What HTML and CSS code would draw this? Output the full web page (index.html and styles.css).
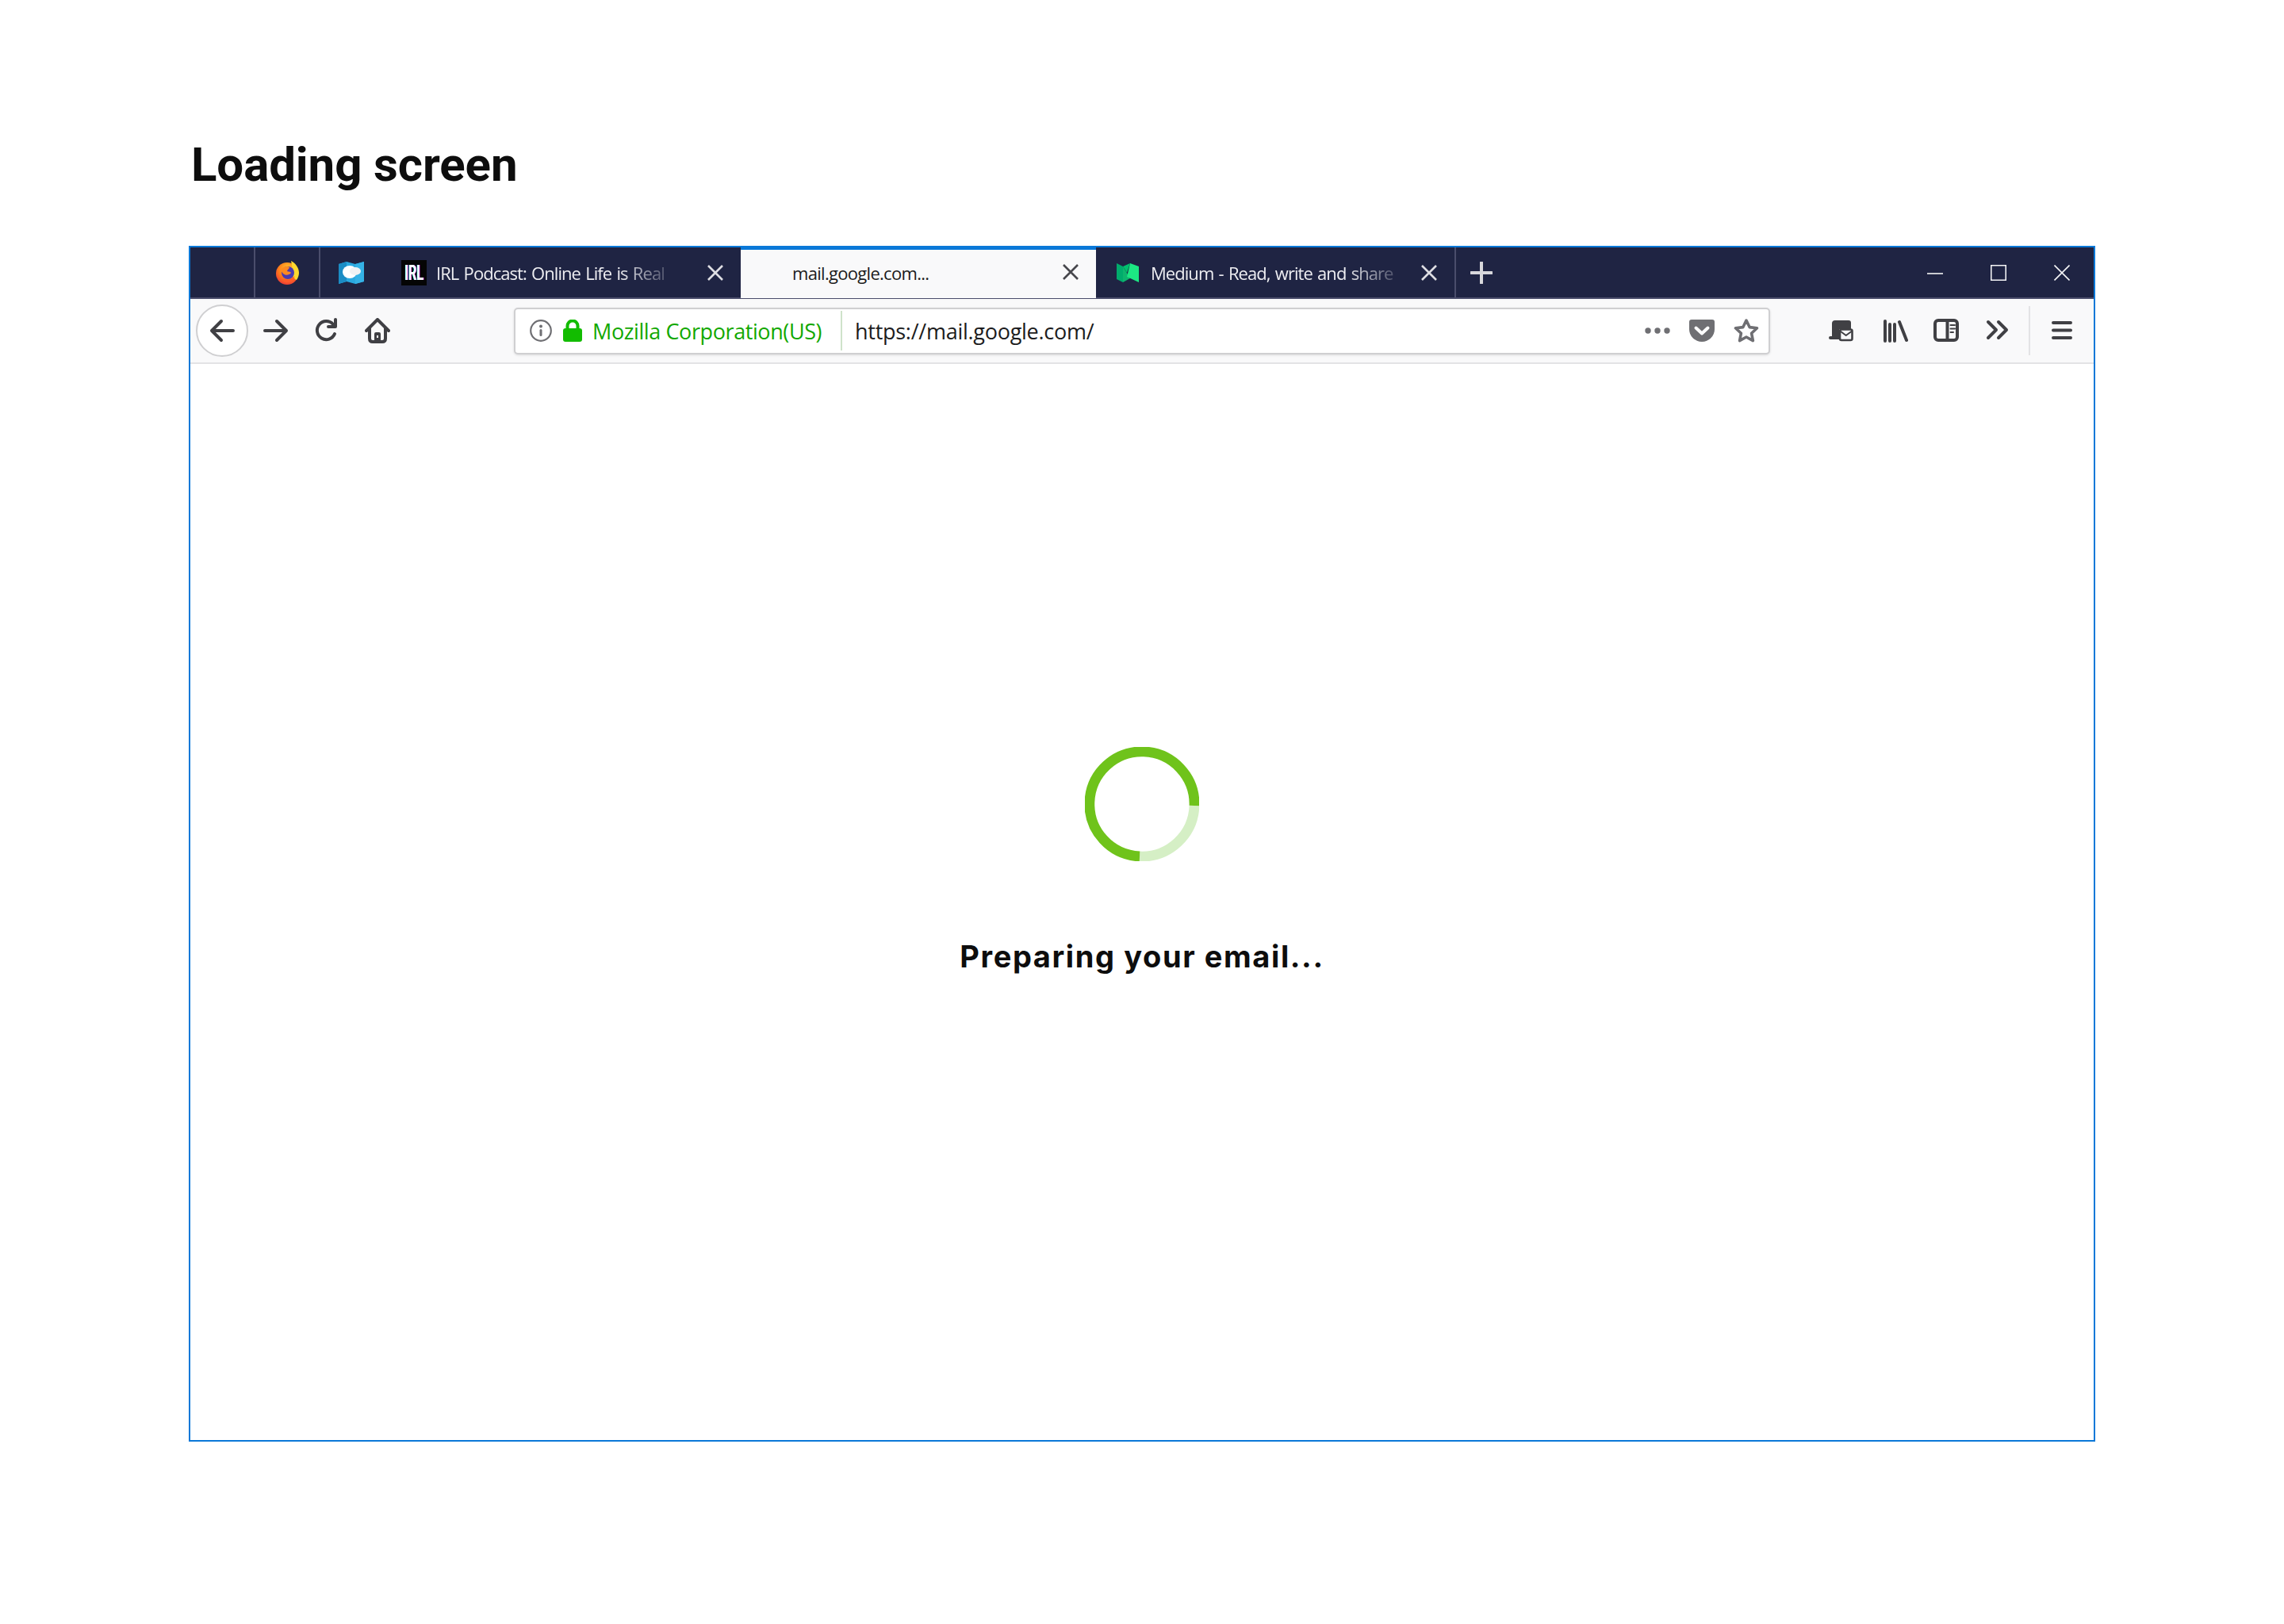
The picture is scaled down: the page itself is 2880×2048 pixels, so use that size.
FILE: index.html
```html
<!DOCTYPE html>
<html lang="en">
<head>
    <meta charset="UTF-8">
    <title>Loading screen</title>
    <link rel="stylesheet" href="styles.css">
</head>
<body>

<h1 class="page-title">Loading screen</h1>

<div class="browser">
    <!-- Tab strip -->
    <div class="tabs">
        <div class="tab-spacer"></div>
        <div class="pinned pinned-sep">
            <svg class="fav-fx" viewBox="0 0 30 30">
                <defs>
                    <radialGradient id="fxBody" cx="0.55" cy="0.3" r="0.8">
                        <stop offset="0" stop-color="#ffcb2e"/>
                        <stop offset="0.55" stop-color="#ff7a1a"/>
                        <stop offset="1" stop-color="#e8263f"/>
                    </radialGradient>
                </defs>
                <circle cx="15" cy="16" r="14" fill="url(#fxBody)"/>
                <path d="M20 0c6 3 10 9 10 15 0 3-1 6-3 9-3-1-5-5-5-9 0-5-1-10-2-15z" fill="#ffd92e"/>
                <circle cx="16" cy="15" r="8" fill="#4a3bb0"/>
                <path d="M8 10c3-3 7-4 10-2 0 2-3 3-3 5 2 1 4 0 5 2-2 3-7 4-10 1-2-2-3-4-2-6z" fill="#ff8a1f"/>
                <path d="M10 23c5 2 11 1 15-4-2 6-7 9-12 8-2 0-3-2-3-4z" fill="#ff5a2c"/>
            </svg>
        </div>
        <div class="pinned pinned-map">
            <svg class="fav-map" viewBox="0 0 32 28">
                <path d="M0 3 10 0 21 3 32 0V25L21 28 10 25 0 28Z" fill="#2aa9e0"/>
                <path d="M0 3 10 0V25L0 28Z" fill="#1b8cc4"/>
                <path d="M21 3 32 0V25L21 28Z" fill="#35b2e6"/>
                <ellipse cx="14" cy="13" rx="9" ry="8" fill="#fff"/>
                <ellipse cx="21" cy="12" rx="7" ry="5" fill="#f0f2f4"/>
            </svg>
        </div>
        <div class="tab tab-irl">
            <div class="fav-irl"><span>IRL</span></div>
            <span class="tab-label">IRL Podcast: Online Life is Real</span>
            <svg class="tab-close" viewBox="0 0 20 20"><path d="M1 1 19 19M19 1 1 19"/></svg>
        </div>
        <div class="tab tab-active">
            <span class="tab-label">mail.google.com...</span>
            <svg class="tab-close" viewBox="0 0 20 20"><path d="M1 1 19 19M19 1 1 19"/></svg>
        </div>
        <div class="tab tab-medium">
            <svg class="fav-medium" viewBox="0 0 28 24">
                <path d="M0 0 8 4V24L0 20Z" fill="#00ab6c"/>
                <path d="M8 4 17 19 8 24Z" fill="#0db56e"/>
                <path d="M17 0 28 4V24L13 17Z" fill="#1ce783"/>
                <path d="M8 4 17 0 13 12Z" fill="#00c06d"/>
            </svg>
            <span class="tab-label">Medium - Read, write and share</span>
            <svg class="tab-close" viewBox="0 0 20 20"><path d="M1 1 19 19M19 1 1 19"/></svg>
        </div>
        <svg class="new-tab" viewBox="0 0 28 28"><path d="M14 1V27M1 14H27"/></svg>
        <div class="win-controls">
            <svg class="win-btn" viewBox="0 0 20 20"><path d="M0 11H20"/></svg>
            <svg class="win-btn" viewBox="0 0 20 20"><path d="M.75.75H19.25V19.25H.75Z"/></svg>
            <svg class="win-btn" viewBox="0 0 20 20"><path d="M.5.5 19.5 19.5M19.5.5 .5 19.5"/></svg>
        </div>
    </div>

    <!-- Navigation toolbar -->
    <div class="toolbar">
        <div class="back-btn">
            <svg class="icon" viewBox="0 0 32 32"><path d="M30 16H3M15 4 3 16 15 28"/></svg>
        </div>
        <div class="nav-btn nav-forward">
            <svg class="icon" viewBox="0 0 32 32"><path d="M2 16H29M17 4 29 16 17 28"/></svg>
        </div>
        <div class="nav-btn">
            <svg class="icon" viewBox="0 0 32 32"><path d="M26 20A11.5 11.5 0 1 1 24 8M27 2V11H18"/></svg>
        </div>
        <div class="nav-btn">
            <svg class="icon" viewBox="0 0 32 32">
                <path d="M2 16 16 2 30 16M6 13V26Q6 30 10 30H22Q26 30 26 26V13"/>
                <path class="solid" d="M12 30V20Q12 18 14 18H18Q20 18 20 20V30ZM15 22V25H17V22Z"/>
            </svg>
        </div>

        <div class="urlbar">
            <svg class="info-icon" viewBox="0 0 28 28">
                <circle cx="14" cy="14" r="12.8"/>
                <circle class="mark" cx="14" cy="8.5" r="2"/>
                <rect class="mark" x="12.5" y="12" width="3" height="9" rx="1.5"/>
            </svg>
            <svg class="lock-icon" viewBox="0 0 24 28">
                <path d="M5.5 13V8a6.5 6.5 0 0 1 13 0v5" class="shackle"/>
                <rect y="11" width="24" height="17" rx="3"/>
            </svg>
            <span class="identity">Mozilla Corporation(US)</span>
            <span class="url-sep"></span>
            <span class="url-text">https://mail.google.com/</span>
            <svg class="dots-icon" viewBox="0 0 32 8">
                <circle cx="4" cy="4" r="3.7"/><circle cx="16" cy="4" r="3.7"/><circle cx="28" cy="4" r="3.7"/>
            </svg>
            <svg class="pocket-icon" viewBox="0 0 32 28">
                <path d="M3 0H29A3 3 0 0 1 32 3V12A16 16 0 0 1 0 12V3A3 3 0 0 1 3 0Z"/>
                <path class="check" d="M8.5 10.5 16 17.5 23.5 10.5"/>
            </svg>
            <svg class="star-icon" viewBox="0 0 32 32">
                <path d="M16 3 20.100 11.600 29.500 12.800 22.600 19.300 24.400 28.600 16 24 7.600 28.600 9.400 19.300 2.500 12.800 11.900 11.600Z"/>
            </svg>
        </div>

        <svg class="icon tool-mail" viewBox="0 0 32 32">
            <path class="solid" d="M5 18V7A4 4 0 0 1 9 3H26A3 3 0 0 1 29 6V14H14V27H3A2 2 0 0 1 3 23H5Z"/>
            <rect class="envelope" x="15" y="14.500" width="15.500" height="13.500" rx="2"/>
            <path class="envelope-flap" d="M16 17 22.700 22 29.500 17"/>
        </svg>
        <svg class="icon tool-library" viewBox="0 0 32 32"><path d="M3 4V29M9 8V29M15 8V29M21 5 30 28"/></svg>
        <svg class="icon tool-sidebar" viewBox="0 0 32 32">
            <rect x="2" y="3" width="28" height="25" rx="4"/>
            <path d="M17.500 3V28"/>
            <path class="thin" d="M21.500 9H27M21.500 13.500H27M21.500 18H25"/>
        </svg>
        <svg class="icon tool-chevrons" viewBox="0 0 32 32"><path d="M4 5 14 15 4 25M17 5 27 15 17 25"/></svg>
        <span class="tool-sep"></span>
        <svg class="icon tool-menu" viewBox="0 0 32 32"><path d="M5 6H27M5 15.500H27M5 25H27"/></svg>
    </div>

    <!-- Page content -->
    <div class="content">
        <svg class="spinner" viewBox="0 0 146 146">
            <path class="spin-light" d="M139.900 75A67 67 0 0 1 70 139.900"/>
            <path class="spin-main" d="M70 139.900A67 67 0 1 1 139.900 75"/>
        </svg>
        <p class="status">Preparing your email...</p>
    </div>
</div>

</body>
</html>
```

FILE: styles.css
```css
body {
    margin: 0;
    padding-top: 173px;
    background: #fff;
    font-family: "Open Sans", "Noto Sans", sans-serif;
}
.page-title {
    margin: 0 0 67px 241px;
    font-family: Roboto, sans-serif;
    font-size: 60px;
    line-height: 70px;
    font-weight: 700;
    letter-spacing: -0.1px;
    color: #0d0d0d;
}
.browser {
    box-sizing: border-box;
    width: 2404px;
    height: 1508px;
    margin-left: 238px;
    border: 2px solid #0a78d8;
    display: flex;
    flex-direction: column;
}

/* tab strip */
.tabs {
    display: flex;
    align-items: center;
    height: 65px;
    flex: none;
    box-sizing: border-box;
    background: #1f2443;
    border-bottom: 2px solid #4a4d6b;
    color: #eeeef2;
}
.tab-spacer {
    width: 80px;
    height: 100%;
    border-right: 2px solid #4a4d6b;
}
.pinned {
    display: flex;
    align-items: center;
    justify-content: center;
    height: 100%;
}
.pinned-sep {
    width: 80px;
    border-right: 2px solid #4a4d6b;
}
.pinned-map {
    width: 78px;
}
.fav-fx {
    width: 30px;
    height: 30px;
}
.fav-map {
    width: 32px;
    height: 28px;
}
.tab {
    display: flex;
    align-items: center;
    box-sizing: border-box;
    width: 452px;
    height: 100%;
    position: relative;
}
.tab-label {
    font-size: 22px;
    letter-spacing: -0.95px;
    word-spacing: 1.5px;
    white-space: nowrap;
    line-height: 30px;
}
.tab-close {
    width: 20px;
    height: 20px;
    fill: none;
    stroke: #dedee3;
    stroke-width: 2.6;
    position: absolute;
    right: 22px;
    top: 22px;
}
.tab-irl {
    padding-left: 24px;
}
.fav-irl {
    width: 32px;
    height: 32px;
    background: #050505;
    margin-right: 12px;
    display: flex;
    align-items: center;
    justify-content: center;
    overflow: hidden;
}
.fav-irl span {
    font-family: Roboto, sans-serif;
    font-weight: 700;
    font-size: 26px;
    line-height: 32px;
    color: #fff;
    transform: scaleX(0.62);
    text-shadow: -1px 0 #2ff, 1px 0 #f3f;
}
.tab-irl .tab-label,
.tab-medium .tab-label {
    -webkit-mask-image: linear-gradient(to right, #000 80%, rgba(0, 0, 0, 0.25) 100%);
    mask-image: linear-gradient(to right, #000 80%, rgba(0, 0, 0, 0.25) 100%);
}
.tab-active {
    width: 448px;
    height: 65px;
    padding-left: 65px;
    padding-bottom: 4px;
    background: #f9f9fa;
    border-top: 4px solid #0a78d8;
    color: #1c1c20;
}
.tab-active .tab-label {
    letter-spacing: -0.7px;
}
.tab-active .tab-close {
    stroke: #47474c;
    right: 22px;
    top: 18px;
}
.tab-medium {
    width: 454px;
    padding-left: 26px;
    border-right: 2px solid #4a4d6b;
}
.fav-medium {
    width: 28px;
    height: 24px;
    margin-right: 15px;
}
.new-tab {
    width: 28px;
    height: 28px;
    margin-left: 18px;
    fill: none;
    stroke: #d7d7db;
    stroke-width: 4;
    stroke-linecap: round;
}
.win-controls {
    display: flex;
    margin-left: auto;
}
.win-btn {
    width: 20px;
    height: 20px;
    padding: 0 30px;
    fill: none;
    stroke: #f4f4f6;
    stroke-width: 1.6;
}

/* navigation toolbar */
.toolbar {
    display: flex;
    align-items: center;
    height: 82px;
    flex: none;
    box-sizing: border-box;
    padding-left: 7px;
    background: #f9f9fa;
    border-bottom: 2px solid #e3e3e5;
}
.icon {
    width: 32px;
    height: 32px;
    flex: none;
    fill: none;
    stroke: #404044;
    stroke-width: 4;
    stroke-linecap: round;
    stroke-linejoin: round;
}
.icon .solid {
    fill: #404044;
    stroke: none;
}
.back-btn {
    box-sizing: border-box;
    width: 66px;
    height: 66px;
    border: 2px solid #cfcfd1;
    border-radius: 50%;
    background: #fff;
    display: flex;
    align-items: center;
    justify-content: center;
}
.nav-btn {
    width: 64px;
    display: flex;
    justify-content: center;
}
.nav-forward {
    margin-left: 3px;
}
.urlbar {
    box-sizing: border-box;
    width: 1584px;
    height: 59px;
    margin-left: 140px;
    display: flex;
    align-items: center;
    background: #fff;
    border: 2px solid #cfcfd1;
    border-radius: 5px;
    box-shadow: 0 1px 3px rgba(0, 0, 0, 0.12);
}
.info-icon {
    width: 28px;
    height: 28px;
    margin-left: 18px;
    flex: none;
    fill: none;
    stroke: #6f6f73;
    stroke-width: 2.2;
}
.info-icon .mark {
    fill: #6f6f73;
    stroke: none;
}
.lock-icon {
    width: 24px;
    height: 28px;
    margin-left: 14px;
    flex: none;
    fill: #12bc00;
}
.lock-icon .shackle {
    fill: none;
    stroke: #12bc00;
    stroke-width: 4;
}
.identity {
    width: 290px;
    margin-left: 13px;
    flex: none;
    font-size: 27px;
    letter-spacing: -0.4px;
    color: #12a800;
    white-space: nowrap;
}
.url-sep {
    width: 2px;
    height: 50px;
    margin-left: 23px;
    background: #cfe3ca;
    flex: none;
}
.url-text {
    flex: 1;
    margin-left: 16px;
    font-size: 27px;
    letter-spacing: -0.27px;
    color: #1c1c20;
    white-space: nowrap;
}
.dots-icon {
    width: 32px;
    height: 8px;
    flex: none;
    fill: #6f6f73;
}
.pocket-icon {
    width: 32px;
    height: 28px;
    margin-left: 24px;
    flex: none;
    fill: #6f6f73;
}
.pocket-icon .check {
    fill: none;
    stroke: #fff;
    stroke-width: 4;
    stroke-linecap: round;
    stroke-linejoin: round;
}
.star-icon {
    width: 32px;
    height: 32px;
    margin: 0 12px 0 24px;
    flex: none;
    fill: none;
    stroke: #6f6f73;
    stroke-width: 3.6;
    stroke-linejoin: round;
}
.tool-mail {
    margin-left: 73px;
}
.tool-mail .envelope {
    fill: #f9f9fa;
    stroke-width: 2.6;
}
.tool-mail .envelope-flap {
    stroke-width: 2;
}
.tool-library {
    margin-left: 37px;
}
.tool-sidebar {
    margin-left: 32px;
}
.tool-sidebar .thin {
    stroke-width: 2;
}
.tool-chevrons {
    margin-left: 33px;
}
.tool-sep {
    width: 2px;
    height: 62px;
    margin-left: 23px;
    background: #e3e3e5;
    flex: none;
}
.tool-menu {
    margin-left: 24px;
}

/* page content */
.content {
    flex: 1;
    display: flex;
    flex-direction: column;
    align-items: center;
    padding-top: 483px;
    background: #fff;
}
.spinner {
    width: 144px;
    height: 144px;
    fill: none;
    stroke-width: 13;
}
.spin-main {
    stroke: #6fc31b;
}
.spin-light {
    stroke: #d5efc5;
}
.status {
    margin: 96px 0 0;
    font-family: Inter, sans-serif;
    font-size: 38px;
    line-height: 48px;
    font-weight: 700;
    letter-spacing: 1.6px;
    color: #0d0d0d;
}
```
